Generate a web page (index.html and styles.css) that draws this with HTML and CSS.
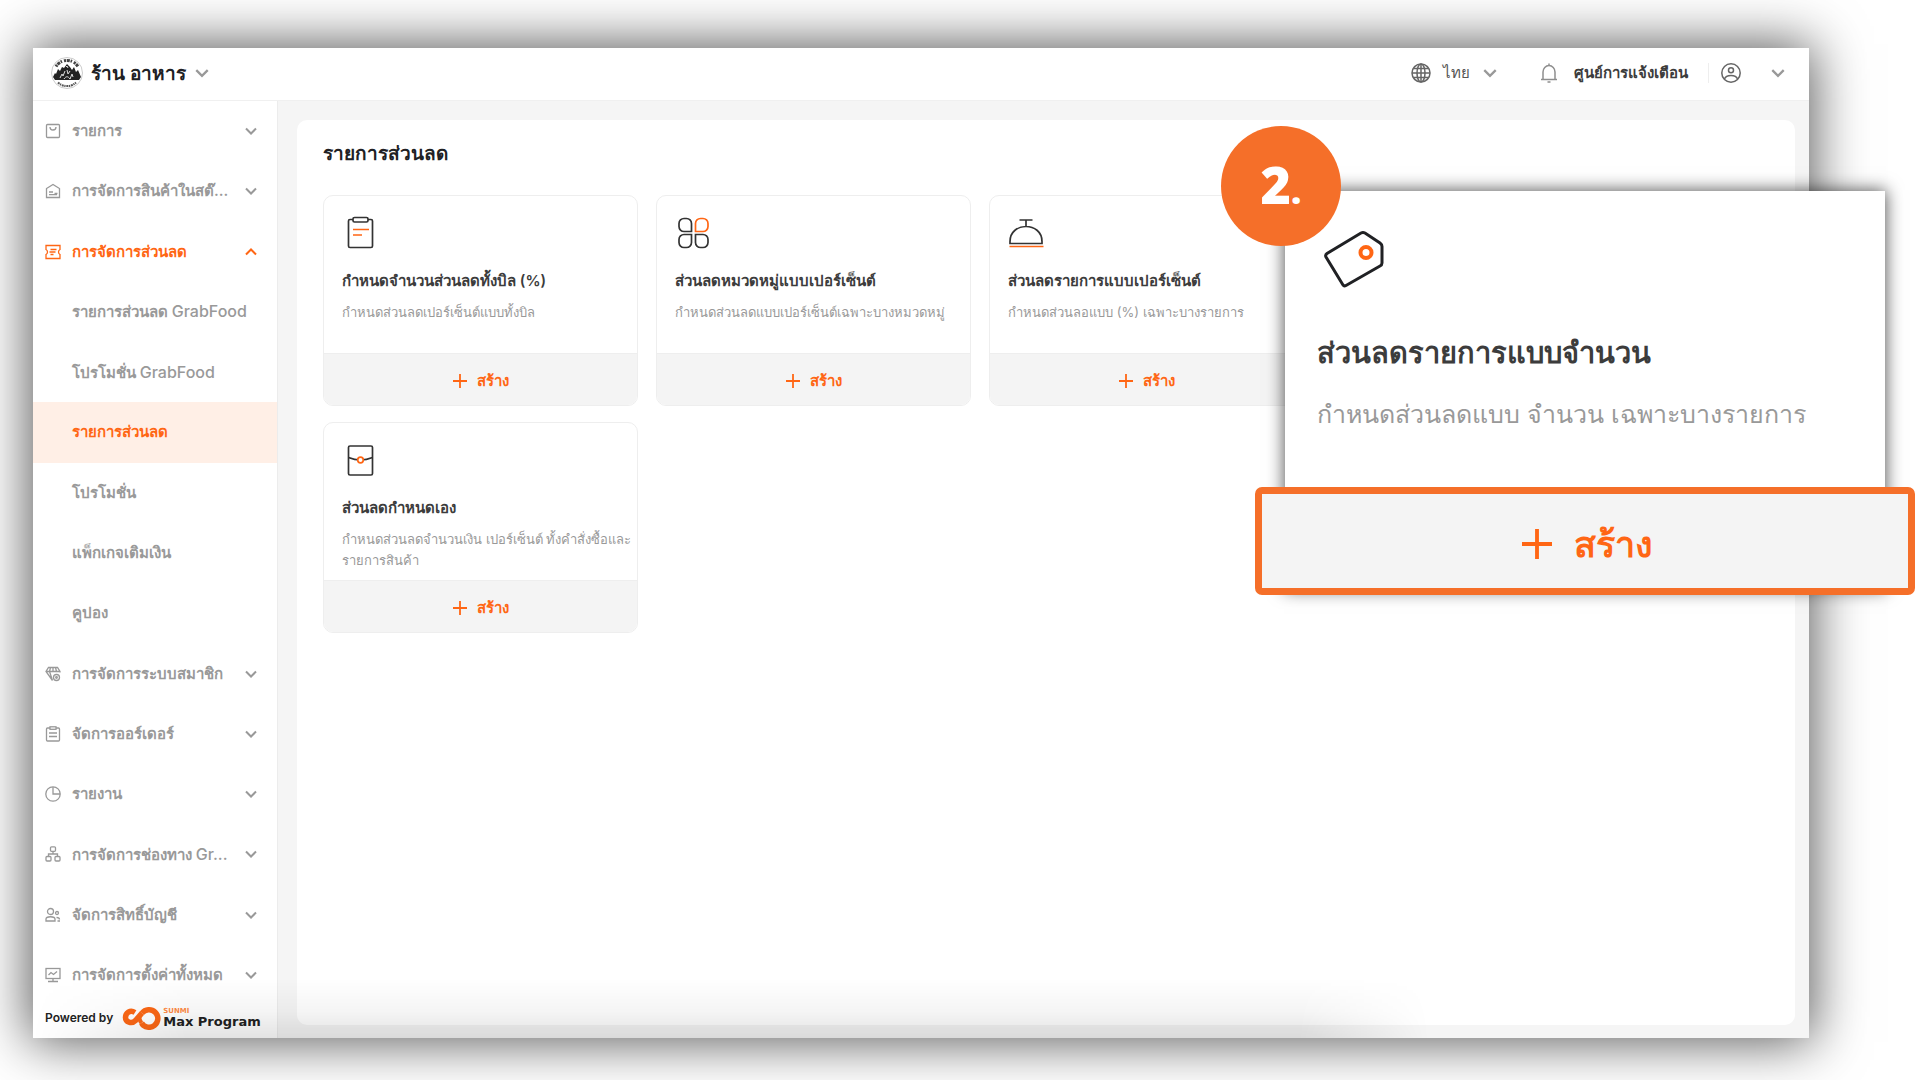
FILE: index.html
```html
<!DOCTYPE html>
<html lang="th">
<head>
<meta charset="utf-8">
<meta name="viewport" content="width=device-width, initial-scale=1">
<title>รายการส่วนลด</title>
<link rel="stylesheet" href="styles.css">
</head>
<body>
<svg class="sprite" aria-hidden="true">
  <symbol id="chevron" viewBox="0 0 14 14"><path d="M2 4.5l5 5 5-5"/></symbol>
  <symbol id="plus" viewBox="0 0 14 14"><path d="M7 0v14M0 7h14"/></symbol>
</svg>
<div class="stage">
  <div class="app">
    <header class="topbar">
      <button class="shop" type="button">
        <svg class="shop-logo" viewBox="0 0 32 32" aria-hidden="true">
          <circle cx="16" cy="16" r="15.5" fill="#fff" stroke="#ccc"/>
          <path d="M5 9.5A13 13 0 0 1 27 9.5" fill="none" stroke="#444" stroke-width="3" stroke-dasharray="2 .7 3 .8 1.5 2"/>
          <path d="M7 25.5A13 13 0 0 0 25 25.5" fill="none" stroke="#555" stroke-width="2" stroke-dasharray="2 .6 1.3 .7"/>
          <path d="M2 20l2-4 1 1 2-5 2 2 2-4 2 1 3-4 3 3 2 3 2-3 2 5 2-2 3 7-2 3H4z" fill="#222"/>
          <path d="M9 21l2-4 1 2 2-5M16 13l1 4 2-3M19 22l2-5 1 3M13 22c2-3 4-3 6 0M15 10l1-1 1 2" fill="none" stroke="#ddd" stroke-width="1"/>
        </svg>
        <span>ร้าน อาหาร</span>
        <svg class="chev"><use href="#chevron"/></svg>
      </button>
      <div class="tools">
        <button class="tool lang" type="button">
          <svg class="ico20" viewBox="0 0 20 20"><circle cx="10" cy="10" r="9"/><ellipse cx="10" cy="10" rx="4" ry="9"/><path d="M10 1v18M1 10h18M2.5 5.5h15M2.5 14.5h15"/></svg>
          <span>ไทย</span>
          <svg class="chev"><use href="#chevron"/></svg>
        </button>
        <button class="tool notice" type="button">
          <svg class="ico20 light" viewBox="0 0 20 20"><path d="M10 .5v1.500M2 16.500h16M4 16.500V9a6 6.500 0 0 1 12 0v7.500M8.500 19h3"/></svg>
          <span>ศูนย์การแจ้งเตือน</span>
        </button>
        <button class="tool account" type="button" aria-label="บัญชี">
          <svg class="ico20" viewBox="0 0 20 20"><circle cx="10" cy="10" r="9.2"/><circle cx="10" cy="7.2" r="2.5"/><path d="M3.5 16c1-3 3.5-3.5 6.500-3.500s5.500.5 6.500 3.500"/></svg>
          <svg class="chev"><use href="#chevron"/></svg>
        </button>
      </div>
    </header>
    <div class="columns">
      <aside class="sidebar">
        <nav>
          <button class="row" type="button"><svg class="ico" viewBox="0 0 16 16"><rect x="1.5" y="1.5" width="13" height="13" rx="1"/><path d="M5 4c0 4 6 4 6 0"/></svg><span>รายการ</span><svg class="chev sm"><use href="#chevron"/></svg></button>
          <button class="row" type="button"><svg class="ico" viewBox="0 0 16 16"><path d="M1.5 14.5V5.5L8 1.5l6.5 4v9zM4 9h4M4 11.7h8M9.500 10.500h3"/></svg><span>การจัดการสินค้าในสต๊...</span><svg class="chev sm"><use href="#chevron"/></svg></button>
          <button class="row open" type="button"><svg class="ico" viewBox="0 0 16 16"><path d="M1 1.500h14v4c-2 1-2 4 0 5v4H1v-4c2-1 2-4 0-5zM5.500 5.500h6M4.500 8h6M5.500 10.500h3"/></svg><span>การจัดการส่วนลด</span><svg class="chev sm"><use href="#chevron"/></svg></button>
          <a class="row sub" href="#"><span>รายการส่วนลด <b>GrabFood</b></span></a>
          <a class="row sub" href="#"><span>โปรโมชั่น <b>GrabFood</b></span></a>
          <a class="row sub current" href="#">รายการส่วนลด</a>
          <a class="row sub" href="#">โปรโมชั่น</a>
          <a class="row sub" href="#">แพ็กเกจเติมเงิน</a>
          <a class="row sub" href="#">คูปอง</a>
          <button class="row" type="button"><svg class="ico" viewBox="0 0 16 16"><path d="M7.500 14.500L1 5.500 3.500 1.500h9L15 5.500v1M1 5.500h14M5.500 1.500l-1 4 3 9M10.500 1.500l1 4M8 1.500v4"/><circle cx="11.5" cy="11.5" r="3"/><circle cx="11.5" cy="11.5" r=".8"/></svg><span>การจัดการระบบสมาชิก</span><svg class="chev sm"><use href="#chevron"/></svg></button>
          <button class="row" type="button"><svg class="ico" viewBox="0 0 16 16"><rect x="1.5" y="2" width="13" height="13" rx="1"/><rect x="5" y=".8" width="6" height="2.5" fill="#fff"/><path d="M4 7h8M4 10.500h8"/></svg><span>จัดการออร์เดอร์</span><svg class="chev sm"><use href="#chevron"/></svg></button>
          <button class="row" type="button"><svg class="ico" viewBox="0 0 16 16"><circle cx="8" cy="8" r="7.2"/><path d="M8 1v7h7"/></svg><span>รายงาน</span><svg class="chev sm"><use href="#chevron"/></svg></button>
          <button class="row" type="button"><svg class="ico" viewBox="0 0 16 16"><rect x="5.5" y=".8" width="5" height="4.5" rx="1"/><rect x="1" y="10.5" width="5" height="4.5" rx="1"/><rect x="10" y="10.5" width="5" height="4.5" rx="1"/><path d="M8 5.500V8M3.500 10.500V8h9v2.500"/></svg><span>การจัดการช่องทาง <b>Gr...</b></span><svg class="chev sm"><use href="#chevron"/></svg></button>
          <button class="row" type="button"><svg class="ico" viewBox="0 0 16 16"><circle cx="5.5" cy="4.5" r="3"/><path d="M1 14v-2c0-3 9-3 9 0v2zM11.500 10.500c2 0 3 .5 3 2M12.500 14H15"/><circle cx="12" cy="6" r="1.5"/></svg><span>จัดการสิทธิ์บัญชี</span><svg class="chev sm"><use href="#chevron"/></svg></button>
          <button class="row" type="button"><svg class="ico" viewBox="0 0 16 16"><rect x="1" y="1.5" width="14" height="10"/><path d="M3.500 8l2.500-2.500 2.500 2L12 4.500M8 11.500v3M3 14.500h10"/></svg><span>การจัดการตั้งค่าทั้งหมด</span><svg class="chev sm"><use href="#chevron"/></svg></button>
        </nav>
        <div class="powered">
          <span>Powered by</span>
          <svg class="brand-mark" viewBox="0 0 40 24" aria-hidden="true">
            <path d="M14 6.500C9 3.500 4.500 7 4.500 11.500s6 7 10 3L21 7" fill="none" stroke="#fb6715" stroke-width="5.5"/>
            <path d="M21 7.200A8.800 8.800 0 1 1 20.500 17" fill="none" stroke="#fb6715" stroke-width="5.5"/>
            <path d="M18.500 11q-.5 3 2 6" fill="none" stroke="#fb6715" stroke-width="4"/>
          </svg>
          <span class="brand"><small>SUNMI</small><strong>Max Program</strong></span>
        </div>
      </aside>
      <main class="panel">
        <h1>รายการส่วนลด</h1>
        <div class="cards">
          <section class="card">
            <div class="card-body">
              <svg class="pic" viewBox="0 0 36 36"><rect x="6.5" y="4.5" width="24" height="28" rx="1.5"/><rect x="11" y="2.5" width="15" height="4.5" rx="1.5" fill="#fff"/><path class="hot" d="M11 14.500h16M11 20h9"/></svg>
              <h2>กำหนดจำนวนส่วนลดทั้งบิล (%)</h2>
              <p>กำหนดส่วนลดเปอร์เซ็นต์แบบทั้งบิล</p>
            </div>
            <button class="create" type="button"><svg><use href="#plus"/></svg>สร้าง</button>
          </section>
          <section class="card">
            <div class="card-body">
              <svg class="pic" viewBox="0 0 36 36"><path d="M9 3.500h2.500a5 5 0 0 1 5 5v8H9a5 5 0 0 1-5-5v-3a5 5 0 0 1 5-5zM9 19.500h7.500v8a5 5 0 0 1-5 5H9a5 5 0 0 1-5-5v-3a5 5 0 0 1 5-5zM20.500 19.500h7.500a5 5 0 0 1 5 5v3a5 5 0 0 1-5 5h-2.500a5 5 0 0 1-5-5z"/><path class="hot" d="M25.500 3.500H28a5 5 0 0 1 5 5v3a5 5 0 0 1-5 5h-7.500v-8a5 5 0 0 1 5-5z"/></svg>
              <h2>ส่วนลดหมวดหมู่แบบเปอร์เซ็นต์</h2>
              <p>กำหนดส่วนลดแบบเปอร์เซ็นต์เฉพาะบางหมวดหมู่</p>
            </div>
            <button class="create" type="button"><svg><use href="#plus"/></svg>สร้าง</button>
          </section>
          <section class="card">
            <div class="card-body">
              <svg class="pic" viewBox="0 0 36 36"><path d="M11.500 5h13M18 5v6M2 28.500v-2c0-20 32-20 32 0v2z"/><path class="hot" d="M1.500 31.500h34"/></svg>
              <h2>ส่วนลดรายการแบบเปอร์เซ็นต์</h2>
              <p>กำหนดส่วนลอแบบ (%) เฉพาะบางรายการ</p>
            </div>
            <button class="create" type="button"><svg><use href="#plus"/></svg>สร้าง</button>
          </section>
          <section class="card custom">
            <div class="card-body">
              <svg class="pic" viewBox="0 0 36 36"><rect x="6.5" y="4" width="24" height="29" rx="1.5"/><path d="M6.500 15.500q12 5 24 0"/><circle class="hot" cx="18.5" cy="18" r="2.8" fill="#fff"/></svg>
              <h2>ส่วนลดกำหนดเอง</h2>
              <p>กำหนดส่วนลดจำนวนเงิน เปอร์เซ็นต์ ทั้งคำสั่งซื้อและ<br>รายการสินค้า</p>
            </div>
            <button class="create" type="button"><svg><use href="#plus"/></svg>สร้าง</button>
          </section>
        </div>
      </main>
    </div>
  </div>
  <section class="callout">
    <div class="callout-body">
      <svg class="tag" viewBox="0 0 72 60"><path d="M44 4Q46 3 48 4L63 14Q65 15.500 65 17.500V34Q65 36 63 37L29 56.500Q27 57.500 26 56L9 28Q8 26 10 24.500z"/><circle class="hot" cx="49" cy="23.5" r="5.5"/></svg>
      <h2>ส่วนลดรายการแบบจำนวน</h2>
      <p>กำหนดส่วนลดแบบ จำนวน เฉพาะบางรายการ</p>
    </div>
    <button class="create big" type="button"><svg><use href="#plus"/></svg>สร้าง</button>
    <div class="step">2<small>.</small></div>
  </section>
</div>
</body>
</html>
```
FILE: styles.css
```css
* { box-sizing: border-box; }
body {
  margin: 0;
  background: #fff;
  color: #202124;
  font-family: Inter, "Liberation Sans", sans-serif;
  font-size: 15px;
}
button {
  border: 0;
  background: none;
  padding: 0;
  font: inherit;
  color: inherit;
  cursor: pointer;
}
a { color: inherit; text-decoration: none; }
h1, h2, p { margin: 0; }
svg { flex: none; fill: none; stroke: currentColor; }
.sprite { display: none; }

.stage {
  position: relative;
  display: flex;
  min-height: 100vh;
  padding: 48px 111px 42px 33px;
  overflow: hidden;
}
.app {
  position: relative;
  flex: 1;
  display: flex;
  flex-direction: column;
  background: #f5f5f5;
  box-shadow: 0 0 50px 4px rgba(0, 0, 0, 0.65);
}
/* Soft haze rising from the lower edge */
.app::after {
  content: "";
  position: absolute;
  left: 0;
  right: 380px;
  bottom: 0;
  height: 60px;
  pointer-events: none;
  background: linear-gradient(to top, rgba(0, 0, 0, 0.11), rgba(0, 0, 0, 0.04) 45%, rgba(0, 0, 0, 0));
  -webkit-mask-image: linear-gradient(to right, transparent, #000 160px, #000 calc(100% - 130px), transparent);
  mask-image: linear-gradient(to right, transparent, #000 160px, #000 calc(100% - 130px), transparent);
}

/* Top bar */
.topbar {
  display: flex;
  justify-content: space-between;
  align-items: center;
  height: 53px;
  padding: 0 23px 2px 18px;
  background: #fff;
  border-bottom: 1px solid #f0f0f0;
}
.shop {
  display: flex;
  align-items: center;
  gap: 8px;
  font-size: 19px;
  font-weight: 600;
}
.shop-logo { width: 32px; height: 32px; stroke: none; }
.chev { width: 16px; height: 16px; color: #999; stroke-width: 2; }
.chev.sm { width: 14px; height: 14px; }
.tools { display: flex; align-items: center; color: #555; }
.tool { display: flex; align-items: center; }
.ico20 { width: 20px; height: 20px; stroke-width: 1.5; color: #666; }
.light { color: #8e8e8e; }
.lang { gap: 12px; margin-right: 41px; font-weight: 500; }
.notice { gap: 15px; margin-right: 20px; font-weight: 600; color: #3c3c3c; }
.account { gap: 29px; padding-left: 12px; border-left: 1px solid #eee; }

/* Sidebar */
.columns { flex: 1; display: flex; }
.sidebar {
  flex: none;
  display: flex;
  flex-direction: column;
  width: 245px;
  background: #fff;
  border-right: 1px solid #ececec;
}
.sidebar nav { flex: 1; display: flex; flex-direction: column; }
.row {
  flex: 1 0 60px;
  display: flex;
  align-items: center;
  width: 100%;
  padding: 0 19px 0 12px;
  gap: 11px;
  color: #999;
  font-weight: 600;
  line-height: 20px;
  text-align: left;
  white-space: nowrap;
}
.row span { flex: 1; }
.row b { font-size: 16px; font-weight: 500; }
.ico { width: 16px; height: 16px; stroke-width: 1.3; }
.sub { padding-left: 39px; }
.open, .current { color: #ff6614; }
.open .chev { color: #ff6614; transform: rotate(180deg); }
.current { background: #ffefe6; }
.powered {
  flex: none;
  display: flex;
  align-items: center;
  gap: 8px;
  height: 33px;
  padding: 0 0 8px 12px;
  color: #222;
  font-size: 12px;
  font-weight: 600;
}
.brand-mark { width: 40px; height: 24px; }
.brand {
  display: flex;
  flex-direction: column;
  margin-left: -6px;
  font-family: "DejaVu Sans", sans-serif;
}
.brand small { color: #ff8a45; font-size: 7px; line-height: 8px; font-weight: 700; }
.brand strong { font-size: 13px; line-height: 14px; }

/* Main panel */
.panel {
  flex: 1;
  margin: 19px 14px 13px 19px;
  padding: 22px 26px;
  background: #fff;
  border-radius: 10px;
}
.panel h1 { margin-bottom: 29px; font-size: 19px; line-height: 24px; font-weight: 600; }
.cards {
  display: grid;
  grid-template-columns: repeat(auto-fill, 315px);
  gap: 16px 18px;
}
.card {
  display: flex;
  flex-direction: column;
  border: 1px solid #eee;
  border-radius: 10px;
  overflow: hidden;
}
.custom { grid-column-start: 1; }
.card-body { flex: 1; padding: 19px 6px 7px 18px; min-height: 157px; }
.pic { display: block; width: 36px; height: 36px; margin-bottom: 19px; color: #333; stroke-width: 1.7; }
.card .hot, .tag .hot { stroke: #ff6614; }
.card h2 { margin-bottom: 10px; color: #3c3c3c; font-size: 15px; line-height: 22px; font-weight: 600; }
.card p { color: #999; font-size: 13px; line-height: 21px; white-space: nowrap; }
.create {
  display: flex;
  justify-content: center;
  align-items: center;
  gap: 10px;
  height: 52px;
  padding-top: 2px;
  background: #f4f4f4;
  border-top: 1px solid #eee;
  color: #ff6614;
  font-size: 15px;
  font-weight: 600;
}
.create svg { width: 14px; height: 14px; stroke-width: 1.8; }

/* Enlarged card over the panel */
.callout {
  position: absolute;
  top: 191px;
  right: 35px;
  width: 600px;
  background: #fff;
  box-shadow: 0 0 16px 1px rgba(0, 0, 0, 0.65);
}
.callout-body { height: 296px; padding: 38px 32px 0; }
.tag { display: block; width: 72px; height: 60px; margin-bottom: 44px; color: #202124; stroke-width: 3; }
.tag .hot { stroke-width: 4; }
.callout h2 { margin-bottom: 21px; color: #3c3c3c; font-size: 29px; line-height: 40px; font-weight: 600; }
.callout p { color: #999; font-size: 25px; line-height: 40px; }
.create.big {
  width: 660px;
  height: 108px;
  margin: 0 -30px -6px;
  padding: 6px 0 0 4px;
  gap: 22px;
  border: 7px solid #f56f29;
  border-radius: 7px;
  font-size: 36px;
}
.create.big svg { width: 30px; height: 30px; }
.step {
  position: absolute;
  top: -65px;
  left: -64px;
  display: flex;
  justify-content: center;
  align-items: baseline;
  width: 120px;
  height: 120px;
  border-radius: 50%;
  background: #f56f29;
  color: #fff;
  font: 800 52px/116px "Open Sans", sans-serif;
}
.step small { font-size: 36px; }
```
